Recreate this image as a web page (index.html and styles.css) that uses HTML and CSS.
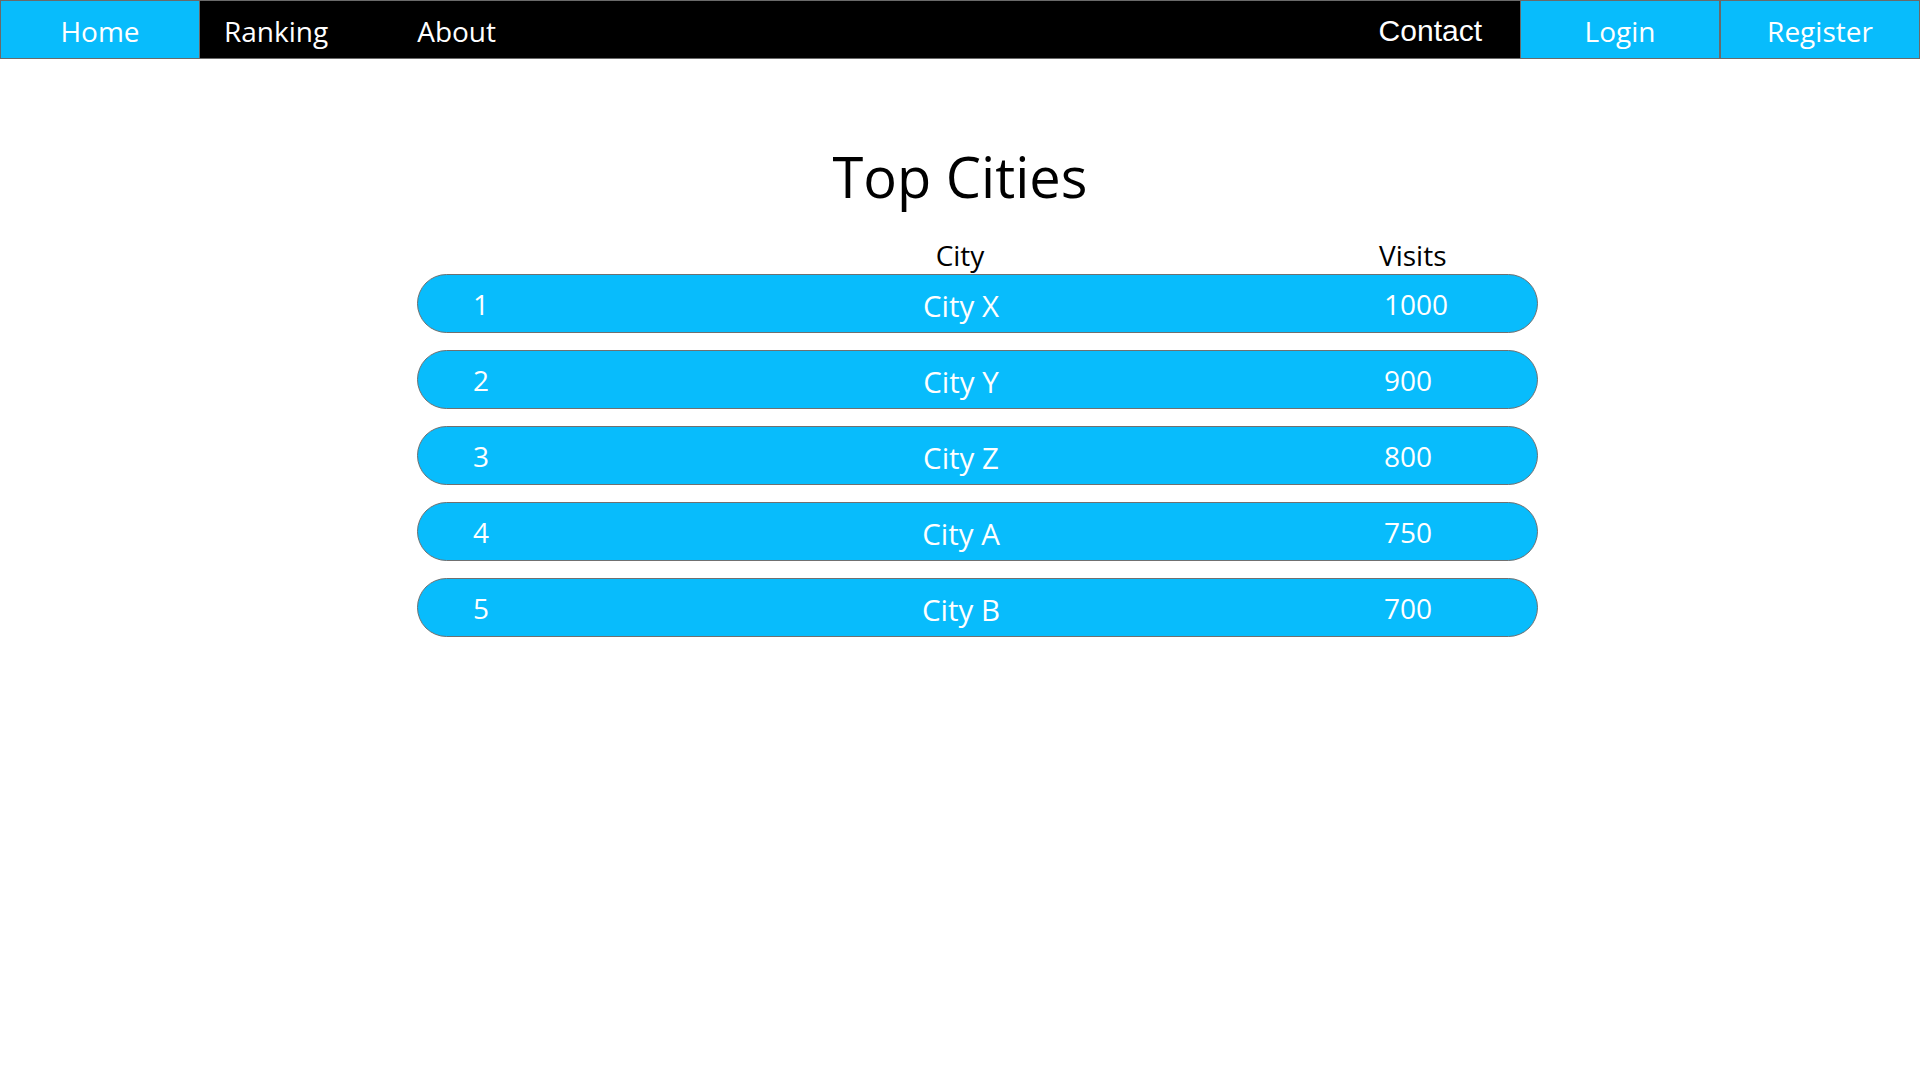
FILE: index.html
```html
<!DOCTYPE html>
<html lang="en">
<head>
<meta charset="utf-8">
<title>Top Cities</title>
<link rel="stylesheet" href="styles.css">
</head>
<body>
<nav class="topnav">
  <a class="nav-item nav-home" href="#">Home</a>
  <div class="nav-links">
    <a class="nav-link" href="#">Ranking</a>
    <a class="nav-link" href="#">About</a>
  </div>
  <a class="nav-contact" href="#">Contact</a>
  <a class="nav-item nav-login" href="#">Login</a>
  <a class="nav-item nav-register" href="#">Register</a>
</nav>
<main class="main">
  <h1 class="title">Top Cities</h1>
  <div class="board">
    <div class="board-head">
      <span class="col-rank"></span>
      <span class="col-city">City</span>
      <span class="col-visits">Visits</span>
    </div>
    <div class="board-row"><span class="col-rank">1</span><span class="col-city">City X</span><span class="col-visits">1000</span></div>
    <div class="board-row"><span class="col-rank">2</span><span class="col-city">City Y</span><span class="col-visits">900</span></div>
    <div class="board-row"><span class="col-rank">3</span><span class="col-city">City Z</span><span class="col-visits">800</span></div>
    <div class="board-row"><span class="col-rank">4</span><span class="col-city">City A</span><span class="col-visits">750</span></div>
    <div class="board-row"><span class="col-rank">5</span><span class="col-city">City B</span><span class="col-visits">700</span></div>
  </div>
</main>
</body>
</html>
```
FILE: styles.css
```css
* { box-sizing: border-box; }

body {
  margin: 0;
  background: #ffffff;
  font-family: "Open Sans", "Noto Sans", sans-serif;
  color: #000;
}

a { text-decoration: none; color: #fff; }

.topnav {
  display: flex;
  height: 59px;
  background: #000;
  border: 1px solid #6a6a6a;
  font-size: 28px;
}

.nav-item {
  display: flex;
  align-items: center;
  justify-content: center;
  background: #08bcfc;
  padding-top: 3px;
}

.nav-home {
  width: 199px;
  border-right: 1px solid #6a6a6a;
}

.nav-links {
  display: flex;
  gap: 89px;
  flex: 1;
  padding-left: 24px;
}

.nav-link {
  display: flex;
  align-items: center;
  padding: 3px 0 0;
}

.nav-contact {
  display: flex;
  align-items: center;
  font-family: "Liberation Sans", Arial, sans-serif;
  font-size: 30px;
  padding: 2px 38px 0 0;
}

.nav-login {
  width: 200px;
  border-left: 1px solid #6a6a6a;
  border-right: 1px solid #6a6a6a;
}

.nav-register {
  width: 199px;
  border-left: 1px solid #6a6a6a;
}

.main {
  padding-top: 82px;
}

.title {
  margin: 0;
  text-align: center;
  font-weight: 400;
  font-size: 56px;
  line-height: 70px;
}

.board {
  width: 1121px;
  margin: 27px 0 0 417px;
  display: flex;
  flex-direction: column;
  gap: 17px;
}

.board-head,
.board-row {
  display: grid;
  grid-template-columns: 443px 200px 1fr;
}

.board-head {
  font-size: 28px;
  line-height: 34px;
  margin-bottom: -15px;
}

.board-row {
  height: 59px;
  background: #08bcfc;
  border: 1px solid #707070;
  border-radius: 30px;
  color: #fff;
  font-size: 28px;
  line-height: 55px;
  padding-top: 2px;
}

.board-row .col-city {
  font-size: 29.5px;
  padding-top: 1px;
}

.col-rank { padding-left: 55px; }
.col-city { text-align: center; }
.col-visits { padding-left: 323px; }
.board-head .col-visits { padding-left: 319px; }
```
